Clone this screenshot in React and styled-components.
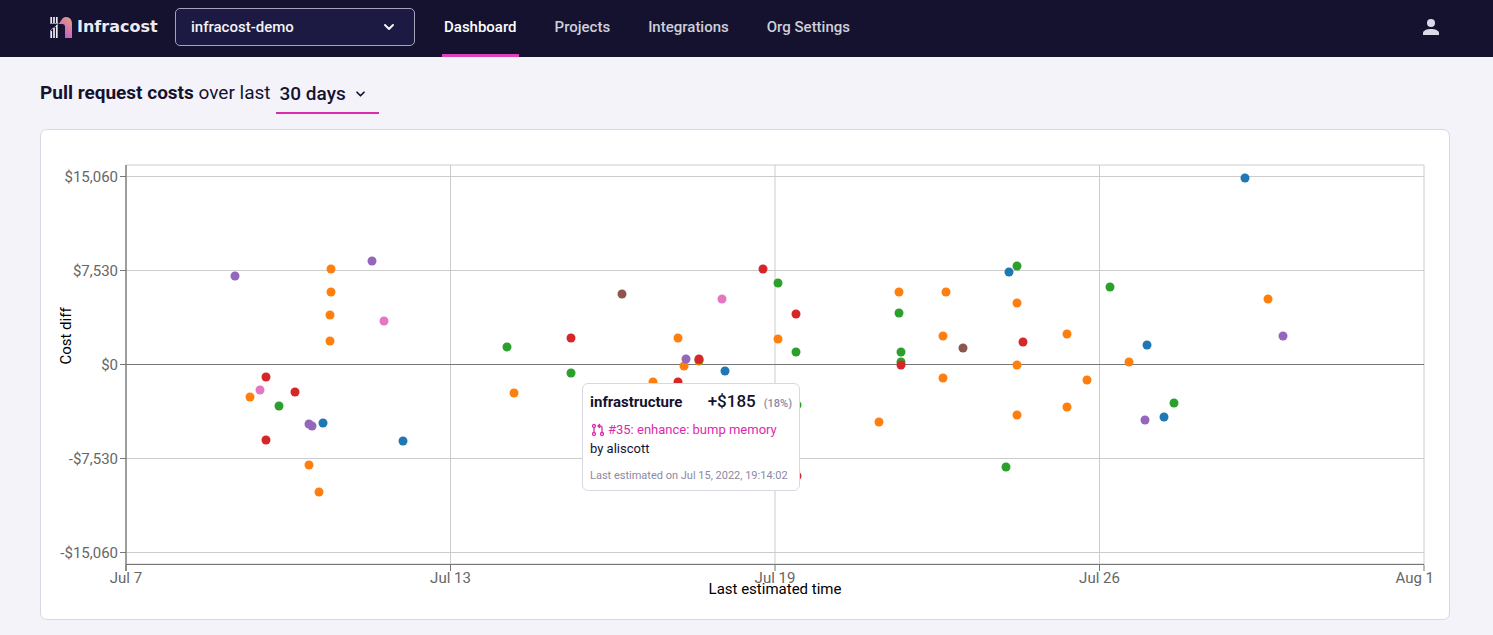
import React from "react";
import styled, { createGlobalStyle } from "styled-components";

const GlobalStyle = createGlobalStyle`
  * { box-sizing: border-box; }
  body { margin: 0; background: #f4f3f9; color: #14122f; font-family: Roboto, "Liberation Sans", sans-serif; font-size: 15px; }
`;

const Header = styled.header`
  display: flex;
  align-items: center;
  height: 57px;
  padding: 0 54px 0 50px;
  background: #14122f;
`;

const Brand = styled.a`
  display: flex;
  align-items: center;
  gap: 4px;
  width: 109px;
  margin: 0 16px 3px 0;
  color: #eceaf3;
  font: 700 16px/24px "DejaVu Sans", sans-serif;
  text-decoration: none;
`;

const OrgPicker = styled.div`
  position: relative;
  width: 240px;
  margin-bottom: 3px;
  color: #f4f3f9;
`;

const OrgSelect = styled.select`
  appearance: none;
  width: 100%;
  height: 38px;
  padding: 0 15px;
  border: 1px solid #a5a3b8;
  border-radius: 5px;
  background: #1c1a42;
  color: inherit;
  font: 500 15px/20px Roboto, sans-serif;
`;

const Chevron = styled.svg`
  position: absolute;
  top: 50%;
  right: ${(p) => p.$right}px;
  transform: translateY(-50%);
  pointer-events: none;
  fill: none;
  stroke: currentColor;
  stroke-width: 2;
  stroke-linecap: round;
  stroke-linejoin: round;
`;

const Nav = styled.nav`
  display: flex;
  align-self: stretch;
  gap: 34px;
  margin-left: 27px;
`;

const NavLink = styled.a`
  padding: 17px 2px 0;
  border-bottom: 3px solid ${(p) => (p.$active ? "#db44b8" : "transparent")};
  border-radius: 2px 2px 0 0;
  color: ${(p) => (p.$active ? "#ffffff" : "#d0cfd9")};
  font-weight: 500;
  line-height: 20px;
  text-decoration: none;
`;

const AccountButton = styled.button`
  display: flex;
  margin: 0 0 3px auto;
  padding: 0;
  border: 0;
  background: none;
  color: #dcdae6;
`;

const Main = styled.main`
  padding: 16px 43px 15px 40px;
`;

const Title = styled.h1`
  display: flex;
  align-items: flex-start;
  gap: 5px;
  margin: 0 0 15px;
  font-size: 19px;
  font-weight: 400;
  line-height: 40px;
`;

const PeriodPicker = styled.span`
  position: relative;
  width: 103px;
`;

const PeriodSelect = styled.select`
  appearance: none;
  display: block;
  width: 100%;
  height: 41px;
  padding: 2px 4px 0;
  border: 0;
  border-bottom: 2px solid #dc29ae;
  border-radius: 0;
  background: transparent;
  color: #14122f;
  font: 500 19px/24px Roboto, sans-serif;
`;

const Card = styled.section`
  padding: 35px 25px 54px 85px;
  border: 1px solid #d9d8e2;
  border-radius: 7px;
  background: #ffffff;
`;

const Plot = styled.div`
  position: relative;
  height: 400px;
`;

const Chart = styled.svg`
  display: block;
  width: 100%;
  height: 100%;
  overflow: visible;
  font: 400 15px Roboto, sans-serif;
`;

const Tooltip = styled.article`
  position: absolute;
  top: 218px;
  left: ${(p) => p.$left}%;
  width: 218px;
  height: 108px;
  padding: 7px;
  border: 1px solid #d9d8e2;
  border-radius: 6px;
  background: #ffffff;
  font-size: 13px;
  line-height: 20px;
  white-space: nowrap;
`;

const TooltipHead = styled.div`
  display: flex;
  align-items: baseline;
  gap: 8px;
  font-weight: 500;
`;

const Repo = styled.strong`
  flex: 1;
  font-size: 15px;
  font-weight: 700;
`;

const Diff = styled.span`
  font-size: 17px;
`;

const Muted = styled.span`
  color: #8c89a5;
  font-size: 11px;
`;

const PullLink = styled.a`
  display: flex;
  align-items: center;
  gap: 4px;
  margin-top: 6px;
  color: #dc29ae;
  text-decoration: none;
`;

const Author = styled.div`
  line-height: 18px;
`;

const Estimated = styled(Muted)`
  display: block;
  margin-top: 8px;
`;

const WIDTH = 1298;
const pct = (x) => `${(x / WIDTH) * 100}%`;

const BLUE = "#1f77b4";
const ORANGE = "#ff7f0e";
const GREEN = "#2ca02c";
const RED = "#d62728";
const PURPLE = "#9467bd";
const BROWN = "#8c564b";
const PINK = "#e377c2";

const points = [
  [109, 111, PURPLE], [205, 104, ORANGE], [205, 127, ORANGE], [204, 150, ORANGE], [204, 176, ORANGE],
  [246, 96, PURPLE], [258, 156, PINK], [140, 212, RED], [134, 225, PINK], [124, 232, ORANGE],
  [169, 227, RED], [153, 241, GREEN], [183, 259, PURPLE], [186, 261, PURPLE], [197, 258, BLUE],
  [140, 275, RED], [183, 300, ORANGE], [193, 327, ORANGE], [277, 276, BLUE], [381, 182, GREEN],
  [388, 228, ORANGE], [445, 173, RED], [445, 208, GREEN], [496, 129, BROWN], [527, 217, ORANGE],
  [552, 173, ORANGE], [552, 217, RED], [558, 201, ORANGE], [560, 194, PURPLE], [573, 196, ORANGE],
  [573, 195, GREEN], [573, 194, RED], [596, 134, PINK], [599, 206, BLUE], [637, 104, RED],
  [652, 118, GREEN], [652, 174, ORANGE], [670, 149, RED], [670, 187, GREEN], [671, 240, GREEN],
  [671, 311, RED], [753, 257, ORANGE], [773, 127, ORANGE], [773, 148, GREEN], [775, 187, GREEN],
  [775, 197, GREEN], [775, 200, RED], [817, 171, ORANGE], [820, 127, ORANGE], [817, 213, ORANGE],
  [837, 183, BROWN], [880, 302, GREEN], [883, 107, BLUE], [891, 101, GREEN], [891, 138, ORANGE],
  [897, 177, RED], [891, 200, ORANGE], [891, 250, ORANGE], [941, 169, ORANGE], [941, 242, ORANGE],
  [961, 215, ORANGE], [984, 122, GREEN], [1003, 197, ORANGE], [1021, 180, BLUE], [1019, 255, PURPLE],
  [1038, 252, BLUE], [1048, 238, GREEN], [1119, 13, BLUE], [1142, 134, ORANGE], [1157, 171, PURPLE],
];

const rows = [[11, "$15,060"], [105, "$7,530"], [199, "$0"], [293, "-$7,530"], [387, "-$15,060"]];
const columns = [[0, "Jul 7"], [25, "Jul 13"], [50, "Jul 19"], [75, "Jul 26"], [100, "Aug 1"]];

function LogoMark() {
  return (
    <svg width="23" height="23" viewBox="0 0 23 23" aria-hidden="true">
      <defs>
        <linearGradient id="arch" x1="1" y1="0" x2=".4" y2="1">
          <stop offset="0" stopColor="#e8a07c" />
          <stop offset="1" stopColor="#c05bc8" />
        </linearGradient>
      </defs>
      <path d="M8 8c3-1 3-7 8-7 4 0 6 3 6 7v14h-7V11c0-2-1-3-3-3z" fill="url(#arch)" />
      <path d="M1.200 1v6M4 1v6M6.800 1v6M1.200 15v7M4 12v10M6.800 9v13" stroke="#eceaf3" strokeWidth="1.700" />
      <path d="M0 7.500h8C7 11 2 12 0 15" fill="none" stroke="#eceaf3" strokeWidth=".6" />
    </svg>
  );
}

function ScatterChart() {
  return (
    <Chart role="img" aria-label="Pull request costs">
      <g stroke="#cccccc">
        <line x1="0" x2="100%" y1="0" y2="0" />
        <line x1="0" x2="100%" y1="399" y2="399" />
        {rows.map(([y]) => <line key={y} x1="0" x2="100%" y1={y} y2={y} shapeRendering="crispEdges" />)}
        {columns.map(([x]) => <line key={x} x1={`${x}%`} x2={`${x}%`} y1="0" y2="400" />)}
      </g>
      <g stroke="#777777">
        <line x1="0" x2="0" y1="0" y2="406" strokeWidth="1.300" />
        <line x1="0" x2="100%" y1="399" y2="399" shapeRendering="crispEdges" />
        <line x1="0" x2="100%" y1="199" y2="199" shapeRendering="crispEdges" />
        {rows.map(([y]) => <line key={y} x1="-6" x2="0" y1={y} y2={y} shapeRendering="crispEdges" />)}
        {columns.map(([x]) => <line key={x} x1={`${x}%`} x2={`${x}%`} y1="400" y2="406" />)}
      </g>
      <g fill="#666666">
        {rows.map(([y, label]) => <text key={y} x="-8" y={y + 6} textAnchor="end">{label}</text>)}
        {columns.map(([x, label]) => (
          <text key={x} x={`${x}%`} dx={x === 100 ? 10 : 0} y="418" textAnchor={x === 100 ? "end" : "middle"}>{label}</text>
        ))}
      </g>
      <text x="50%" y="429" textAnchor="middle">Last estimated time</text>
      <text transform="translate(-55 171) rotate(-90)" textAnchor="middle">Cost diff</text>
      {points.map(([x, y, color], i) => <circle key={i} cx={pct(x)} cy={y} r="4.500" fill={color} />)}
    </Chart>
  );
}

export default function App() {
  return (
    <>
      <GlobalStyle />
      <Header>
        <Brand href="#"><LogoMark />Infracost</Brand>
        <OrgPicker>
          <OrgSelect aria-label="Organization"><option>infracost-demo</option></OrgSelect>
          <Chevron $right={20} width="12" height="8" viewBox="0 0 12 8"><path d="M2 2l4 4 4-4" /></Chevron>
        </OrgPicker>
        <Nav>
          <NavLink href="#" $active>Dashboard</NavLink>
          <NavLink href="#">Projects</NavLink>
          <NavLink href="#">Integrations</NavLink>
          <NavLink href="#">Org Settings</NavLink>
        </Nav>
        <AccountButton aria-label="Account">
          <svg width="16" height="16" viewBox="0 0 16 16" fill="currentColor">
            <circle cx="8" cy="4" r="4" />
            <path d="M0 16v-2c0-2.500 4-4 8-4s8 1.500 8 4v2z" />
          </svg>
        </AccountButton>
      </Header>
      <Main>
        <Title>
          <span><b>Pull request costs</b> over last</span>
          <PeriodPicker>
            <PeriodSelect aria-label="Period"><option>30 days</option></PeriodSelect>
            <Chevron $right={13} width="11" height="7" viewBox="0 0 12 8"><path d="M2 2l4 4 4-4" /></Chevron>
          </PeriodPicker>
        </Title>
        <Card>
          <Plot>
            <ScatterChart />
            <Tooltip $left={(456 / WIDTH) * 100}>
              <TooltipHead>
                <Repo>infrastructure</Repo>
                <Diff>+$185</Diff>
                <Muted>(18%)</Muted>
              </TooltipHead>
              <PullLink href="#">
                <svg width="14" height="14" viewBox="0 0 14 14" fill="none" stroke="currentColor" strokeWidth="1.300" aria-hidden="true">
                  <circle cx="4" cy="3" r="1.500" /><circle cx="4" cy="11" r="1.500" /><circle cx="12" cy="11" r="1.500" />
                  <path d="M4 4.500v5M12 9.500V5q0-2-2-2H8M10 1L8 3l2 2" />
                </svg>
                #35: enhance: bump memory
              </PullLink>
              <Author>by aliscott</Author>
              <Estimated>Last estimated on Jul 15, 2022, 19:14:02</Estimated>
            </Tooltip>
          </Plot>
        </Card>
      </Main>
    </>
  );
}
